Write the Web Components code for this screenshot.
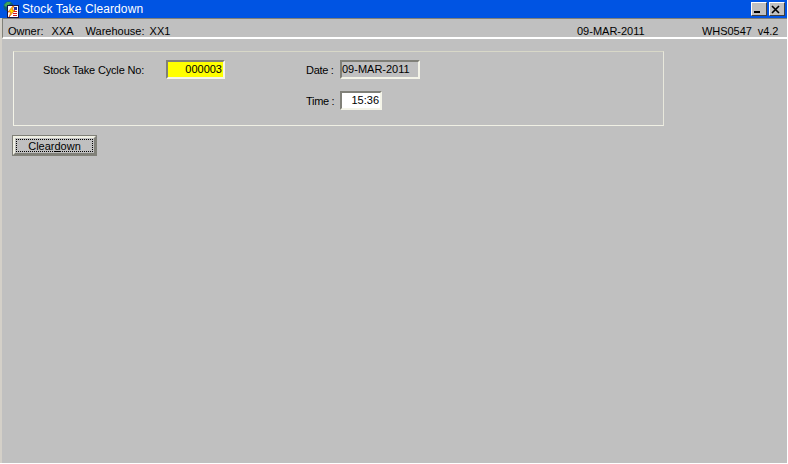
<!DOCTYPE html>
<html>
<head>
<meta charset="utf-8">
<title>Stock Take Cleardown</title>
<style>
  html, body { margin: 0; padding: 0; background: #c0c0c0; overflow: hidden; }
  body { font-family: "Liberation Sans", Arial, sans-serif; font-size: 11px; color: #000; }
</style>
</head>
<body>
<forms-window caption="Stock Take Cleardown">
  <status-bar>
    <span slot="left" style="word-spacing:1px">Owner:&nbsp;&nbsp;XXA</span>
    <span slot="left" style="word-spacing:-0.5px">Warehouse:&nbsp;&nbsp;XX1</span>
    <span slot="date">09-MAR-2011</span>
    <span slot="version">WHS0547&nbsp; v4.2</span>
  </status-bar>
  <cycle-panel>
    <text-field slot="cycle" kind="yellow" align="right" width="59">000003</text-field>
    <text-field slot="date" kind="readonly" width="80">09-MAR-2011</text-field>
    <text-field slot="time" kind="white" align="right" width="42">15:36</text-field>
  </cycle-panel>
  <forms-button><span>Clear<u>d</u>own</span></forms-button>
</forms-window>

<script>
class FormsWindow extends HTMLElement {
  connectedCallback() {
    this.attachShadow({ mode: 'open' });
    this.shadowRoot.innerHTML = `
      <style>
        :host {
          display: flex;
          flex-direction: column;
          width: 788px;
          height: 464px;
          box-sizing: border-box;
          background: #c0c0c0;
          border-right: 1px solid #fff;
          border-bottom: 1px solid #fff;
        }
        .title {
          display: flex;
          align-items: center;
          height: 18px;
          flex: none;
          background: #0054e3;
          color: #fff;
          font-size: 12px;
          letter-spacing: 0.1px;
          padding: 0 2px 0 3px;
        }
        .title svg { flex: none; margin-right: 3px; }
        .title .cap { flex: 1; margin-top: -1px; }
        .btn {
          width: 16px;
          height: 14px;
          box-sizing: border-box;
          margin-left: 2px;
          background: #c0c0c0;
          border: 1px solid;
          border-color: #fff #404040 #404040 #fff;
          display: flex;
          align-items: center;
          justify-content: center;
        }
        .body {
          flex: 1;
          display: flex;
          flex-direction: column;
          align-items: flex-start;
          border-left: 2px solid #d4d0c8;
        }
      </style>
      <div class="title">
        <svg width="16" height="17" viewBox="0 0 16 17">
          <circle cx="5.5" cy="5.5" r="5" fill="#0f5f78"/>
          <path d="M1 4l3-3 4 0-2 3-3 2z" fill="#3fa65a"/>
          <rect x="4" y="4" width="12" height="13" fill="#14144a"/>
          <rect x="5" y="5" width="10" height="11" fill="#fff"/>
          <rect x="11" y="6" width="3" height="3" fill="#1c2f9c"/>
          <path d="M10 10.5h4M10 12.5h4M10 14.5h4" stroke="#d81818" stroke-width="1"/>
          <path d="M10 5L5 11h3l-2 5 6-7H9l2-4z" fill="#ffe000" stroke="#d03000" stroke-width=".6"/>
        </svg>
        <span class="cap">${this.getAttribute('caption')}</span>
        <span class="btn"><svg width="9" height="9" viewBox="0 0 9 9"><rect x="1" y="6" width="6" height="2" fill="#000"/></svg></span>
        <span class="btn"><svg width="9" height="9" viewBox="0 0 9 9"><path d="M1 1l7 7M8 1L1 8" stroke="#000" stroke-width="1.6"/></svg></span>
      </div>
      <div class="body">
        <slot></slot>
      </div>
    `;
  }
}

class StatusBar extends HTMLElement {
  connectedCallback() {
    this.attachShadow({ mode: 'open' });
    this.shadowRoot.innerHTML = `
      <style>
        :host {
          display: grid;
          grid-template-columns: 569px 125px 1fr;
          align-items: center;
          width: 100%;
          height: 21px;
          box-sizing: border-box;
          border-top: 1px solid #808078;
          border-left: 1px solid #808078;
          border-bottom: 2px solid #fff;
          padding: 6px 0 0 5px;
        }
        .left { display: flex; gap: 12px; }
      </style>
      <div class="left"><slot name="left"></slot></div>
      <div><slot name="date"></slot></div>
      <div style="letter-spacing:-0.05px"><slot name="version"></slot></div>
    `;
  }
}

class CyclePanel extends HTMLElement {
  connectedCallback() {
    this.attachShadow({ mode: 'open' });
    this.shadowRoot.innerHTML = `
      <style>
        :host {
          display: grid;
          grid-template-columns: 123px 59px 1fr;
          grid-template-rows: 19px 19px;
          row-gap: 12px;
          width: 651px;
          height: 75px;
          box-sizing: border-box;
          border: 1px solid;
          border-color: #d8d8c8 #e8e8dc #f0f0e4 #f4f4e8;
          padding: 8px 0 0 29px;
          margin: 12px 0 0 11px;
        }
        .lbl { display: flex; align-items: center; white-space: nowrap; }
        .first { letter-spacing: -0.16px; }
        .second { display: flex; align-items: center; padding-left: 81px; gap: 6px; grid-column: 3; }
        .second .lbl { width: 28px; letter-spacing: -0.3px; }
      </style>
      <span class="lbl first">Stock Take Cycle No:</span>
      <slot name="cycle"></slot>
      <div class="second"><span class="lbl">Date :</span><slot name="date"></slot></div>
      <div class="second" style="grid-row:2"><span class="lbl">Time :</span><slot name="time"></slot></div>
    `;
  }
}

class TextField extends HTMLElement {
  connectedCallback() {
    const kind = this.getAttribute('kind');
    const bg = { yellow: '#ffff00', white: '#ffffff', readonly: '#c0c0c0' }[kind];
    const align = this.getAttribute('align') || 'left';
    this.attachShadow({ mode: 'open' });
    this.shadowRoot.innerHTML = `
      <style>
        :host {
          display: block;
          width: ${this.getAttribute('width')}px;
          height: 19px;
          box-sizing: border-box;
          border: 2px solid;
          border-color: #808078 #f4f4e8 #f4f4e8 #808078;
          background: ${bg};
          text-align: ${align};
          line-height: 14px;
          font-size: 11px;
          padding: 0 1px 0 0;
        }
      </style>
      <slot></slot>
    `;
  }
}

class FormsButton extends HTMLElement {
  connectedCallback() {
    this.attachShadow({ mode: 'open' });
    this.shadowRoot.innerHTML = `
      <style>
        :host {
          display: block;
          width: 85px;
          height: 21px;
          box-sizing: border-box;
          margin: 9px 0 0 10px;
          border: 1px solid #808078;
          background: #c0c0c0;
        }
        .bevel {
          height: 100%;
          box-sizing: border-box;
          border: 2px solid;
          border-color: #f0f0e4 #808078 #808078 #f0f0e4;
          padding: 1px;
        }
        .focus {
          height: 100%;
          box-sizing: border-box;
          border: 1px dotted #000;
          display: flex;
          align-items: center;
          justify-content: center;
          font-size: 11px;
        }
      </style>
      <div class="bevel"><div class="focus"><slot></slot></div></div>
    `;
  }
}

customElements.define('forms-window', FormsWindow);
customElements.define('status-bar', StatusBar);
customElements.define('cycle-panel', CyclePanel);
customElements.define('text-field', TextField);
customElements.define('forms-button', FormsButton);
</script>
</body>
</html>
